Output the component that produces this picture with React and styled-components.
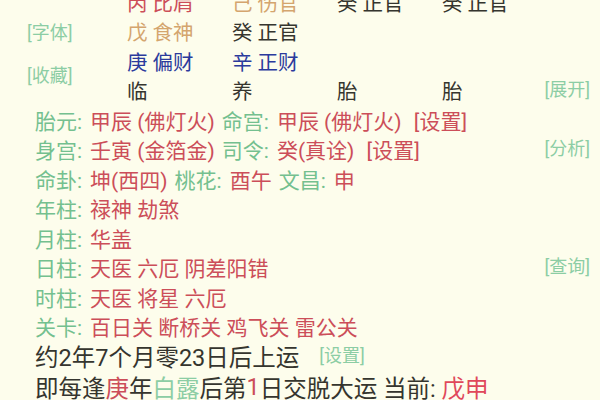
import styled, { createGlobalStyle } from "styled-components";

const tones = {
  red: "#cc4e59",
  bright: "#e0485a",
  green: "#74c08f",
  soft: "#8ccda4",
  tan: "#d4a56e",
  blue: "#2b3a9c",
  dark: "#35352e",
};

const GlobalStyle = createGlobalStyle`
  html, body {
    margin: 0;
    background: #fdfdec;
  }
  body {
    font-family: Roboto, "Noto Sans CJK SC", sans-serif;
    overflow: hidden;
  }
`;

const chart = [
  [
    ["丙 比肩", "red"],
    ["己 伤官", "tan"],
    ["癸 正官", "dark"],
    ["癸 正官", "dark"],
  ],
  [
    ["戊 食神", "tan"],
    ["癸 正官", "dark"],
    ["", "dark"],
    ["", "dark"],
  ],
  [
    ["庚 偏财", "blue"],
    ["辛 正财", "blue"],
    ["", "dark"],
    ["", "dark"],
  ],
  [
    ["临", "dark"],
    ["养", "dark"],
    ["胎", "dark"],
    ["胎", "dark"],
  ],
];

const details = [
  {
    parts: [
      ["胎元", "甲辰 (佛灯火)"],
      ["命宫", "甲辰 (佛灯火)"],
    ],
    setting: true,
  },
  {
    parts: [
      ["身宫", "壬寅 (金箔金)"],
      ["司令", "癸(真诠)"],
    ],
    setting: true,
    action: "分析",
  },
  {
    parts: [
      ["命卦", "坤(西四)"],
      ["桃花", "酉午"],
      ["文昌", "申"],
    ],
  },
  { parts: [["年柱", "禄神 劫煞"]] },
  { parts: [["月柱", "华盖"]] },
  { parts: [["日柱", "天医 六厄 阴差阳错"]], action: "查询" },
  { parts: [["时柱", "天医 将星 六厄"]] },
  { parts: [["关卡", "百日关 断桥关 鸡飞关 雷公关"]] },
];

export default function App() {
  return (
    <Page>
      <GlobalStyle />
      <Scroll>
        <Top>
          <Side>
            <Action>[字体]</Action>
            <Action>[收藏]</Action>
          </Side>
          <Grid>
            {chart.flat().map(([text, tone], i) => (
              <Cell key={i} tone={tone}>
                {text}
              </Cell>
            ))}
          </Grid>
          <Aside>
            <Action>[展开]</Action>
          </Aside>
        </Top>
        <Details>
          {details.map((row, i) => (
            <Line key={i}>
              <span>
                {row.parts.map(([label, value], j) => (
                  <Pair key={j}>
                    <Label>{label}:</Label>
                    <Text tone="red">{value}</Text>
                  </Pair>
                ))}
                {row.setting && <Text tone="red"> [设置]</Text>}
              </span>
              {row.action && <Action>[{row.action}]</Action>}
            </Line>
          ))}
          <BigLine>
            <Text tone="dark">约2年7个月零23日后上运</Text>
            <Action indent>[设置]</Action>
          </BigLine>
          <BigLine>
            <Text tone="dark">即每逢</Text>
            <Text tone="red">庚</Text>
            <Text tone="dark">年</Text>
            <Text tone="soft">白露</Text>
            <Text tone="dark">后第</Text>
            <Text tone="red">1</Text>
            <Text tone="dark">日交脱大运 当前: </Text>
            <Text tone="bright">戊申</Text>
          </BigLine>
        </Details>
      </Scroll>
    </Page>
  );
}

const Page = styled.div`
  width: 600px;
  height: 400px;
  overflow: hidden;
  background: #fdfdec;
`;

const Scroll = styled.div`
  margin-top: -13px;
`;

const Top = styled.div`
  display: flex;
`;

const Side = styled.div`
  width: 100px;
  flex-shrink: 0;
  padding: 34px 0 0 27px;
  display: flex;
  flex-direction: column;
  gap: 19px;
`;

const Grid = styled.div`
  flex-shrink: 0;
  display: grid;
  grid-template-columns: repeat(4, 105px);
  grid-auto-rows: 29.5px;
  align-items: center;
  font-size: 20.5px;
`;

const Cell = styled.div`
  color: ${(p) => tones[p.tone]};
  white-space: pre;
`;

const Aside = styled.div`
  flex: 1;
  min-width: 0;
  display: flex;
  justify-content: flex-end;
  align-items: center;
  align-self: flex-end;
  height: 29.5px;
  padding-right: 10px;
  white-space: nowrap;
`;

const Action = styled.span`
  font-size: 18px;
  line-height: 24px;
  color: ${tones.soft};
  white-space: nowrap;
  margin-left: ${(p) => (p.indent ? "20px" : "0")};
`;

const Details = styled.div`
  padding: 0 10px 0 35px;
`;

const Line = styled.div`
  height: 29.5px;
  display: flex;
  align-items: center;
  justify-content: space-between;
  font-size: 21px;
  white-space: pre;
`;

const BigLine = styled.div`
  height: 30.5px;
  display: flex;
  align-items: center;
  font-size: 23.5px;
  white-space: pre;
`;

const Pair = styled.span`
  margin-right: 7px;
`;

const Label = styled.span`
  color: ${tones.green};
  margin-right: 8px;
`;

const Text = styled.span`
  color: ${(p) => tones[p.tone]};
`;
